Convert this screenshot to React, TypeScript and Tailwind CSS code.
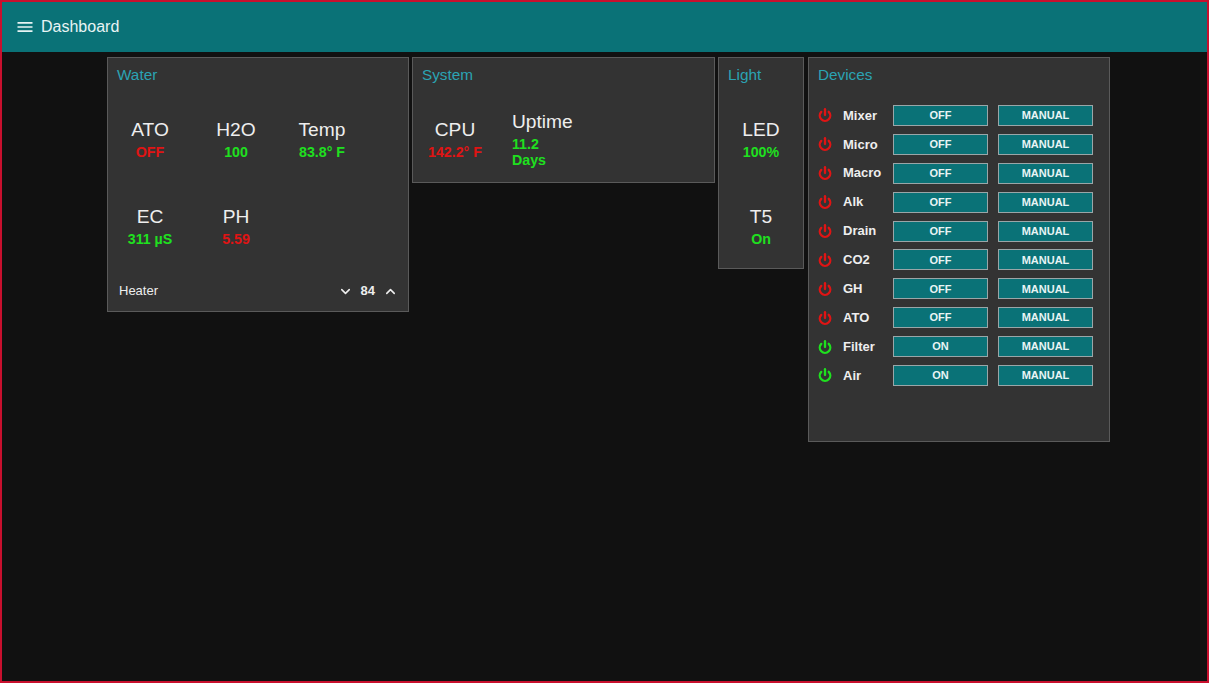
import { ChevronDown, ChevronUp, Power } from "lucide-react";

const devices = [
  { name: "Mixer", on: false },
  { name: "Micro", on: false },
  { name: "Macro", on: false },
  { name: "Alk", on: false },
  { name: "Drain", on: false },
  { name: "CO2", on: false },
  { name: "GH", on: false },
  { name: "ATO", on: false },
  { name: "Filter", on: true },
  { name: "Air", on: true },
];

function Gauge({ label, value, good }: { label: string; value: string; good: boolean }) {
  return (
    <div className="flex h-[87px] w-[86px] flex-col items-center pt-[30px]">
      <div className="text-[19.2px] leading-[29px] text-[#eeeeee]">{label}</div>
      <div className={`text-[14.2px] leading-[16px] font-bold whitespace-nowrap ${good ? "text-[#1fe01f]" : "text-[#e01414]"}`}>
        {value}
      </div>
    </div>
  );
}

function Panel({ title, className, children }: { title: string; className: string; children: React.ReactNode }) {
  return (
    <section className={`shrink-0 border border-[#5a5a5a] bg-[#333333] ${className}`}>
      <h2 className="pt-[7px] pl-[9px] text-[15.3px] leading-[20px] font-normal text-[#2ba3b3]">{title}</h2>
      {children}
    </section>
  );
}

export default function App() {
  return (
    <div className="flex h-[683px] flex-col border-2 border-[#c8102e] bg-[#111111] font-['Liberation_Sans',Arial,sans-serif]">
      <header className="flex h-[50px] shrink-0 items-center gap-[6px] bg-[#0a7277] pl-[13px] text-[#e8f4f4]">
        <svg viewBox="0 0 24 24" className="h-[20px] w-[20px] fill-current">
          <path d="M3 18h18v-2H3v2zm0-5h18v-2H3v2zm0-7v2h18V6H3z" />
        </svg>
        <span className="text-[16px] leading-[20px]">Dashboard</span>
      </header>

      <main className="flex items-start pt-[5px] pl-[105px]">
        <Panel title="Water" className="mr-[3px] h-[255px] w-[302px]">
          <div className="-ml-px grid grid-cols-[86px_86px_86px]">
            <Gauge label="ATO" value="OFF" good={false} />
            <Gauge label="H2O" value="100" good />
            <Gauge label="Temp" value="83.8° F" good />
            <Gauge label="EC" value="311 µS" good />
            <Gauge label="PH" value="5.59" good={false} />
          </div>
          <div className="mt-[20px] flex h-[24px] items-center pr-[10px] pl-[11px] text-[13px] text-[#eeeeee]">
            <span className="flex-1">Heater</span>
            <ChevronDown size={15} strokeWidth={2.5} />
            <span className="mx-[8px] font-bold">84</span>
            <ChevronUp size={15} strokeWidth={2.5} />
          </div>
        </Panel>

        <Panel title="System" className="mr-[3px] h-[126px] w-[303px]">
          <div className="-ml-px flex">
            <Gauge label="CPU" value="142.2° F" good={false} />
            <div className="pt-[22px] pl-[14px]">
              <div className="text-[19.2px] leading-[29px] text-[#eeeeee]">Uptime</div>
              <div className="text-[14.2px] leading-[16px] font-bold text-[#1fe01f]">
                11.2
                <br />
                Days
              </div>
            </div>
          </div>
        </Panel>

        <Panel title="Light" className="mr-[4px] h-[212px] w-[86px]">
          <div className="-ml-px">
            <Gauge label="LED" value="100%" good />
            <Gauge label="T5" value="On" good />
          </div>
        </Panel>

        <Panel title="Devices" className="h-[385px] w-[302px]">
          <div className="pt-[16px]">
            {devices.map((d) => (
              <div key={d.name} className="flex h-[28.9px] items-center">
                <Power
                  size={14}
                  strokeWidth={4}
                  className={`ml-[9px] shrink-0 ${d.on ? "text-[#1fe01f]" : "text-[#e01414]"}`}
                />
                <span className="ml-[11px] w-[50px] text-[13px] font-bold text-[#eeeeee]">{d.name}</span>
                <button className="h-[21px] w-[95px] border border-[#9aa6a8] bg-[#0a7277] text-[11px] font-bold text-[#e8f4f4]">
                  {d.on ? "ON" : "OFF"}
                </button>
                <button className="ml-[10px] h-[21px] w-[95px] border border-[#9aa6a8] bg-[#0a7277] text-[11px] font-bold text-[#e8f4f4]">
                  MANUAL
                </button>
              </div>
            ))}
          </div>
        </Panel>
      </main>
    </div>
  );
}
